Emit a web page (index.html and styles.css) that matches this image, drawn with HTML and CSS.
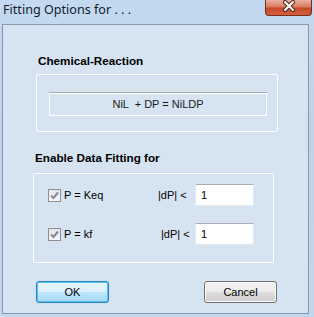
FILE: index.html
```html
<!DOCTYPE html>
<html>

<head>
    <meta charset="utf-8">
    <title>Fitting Options for . . .</title>
    <link rel="stylesheet" href="styles.css">
</head>

<body>
    <div class="window col">
        <div class="titlebar row">
            <span class="title">Fitting Options for . . .</span>
            <span class="close">
                <svg width="16" height="12" viewBox="0 0 16 12">
                    <path d="M4 2 L12 10 M12 2 L4 10" stroke="#4a2a22" stroke-width="4" stroke-linecap="round"/>
                    <path d="M4 2 L12 10 M12 2 L4 10" stroke="#fff" stroke-width="2" stroke-linecap="round"/>
                </svg>
            </span>
        </div>

        <div class="client">
            <p class="group-title">Chemical-Reaction</p>
            <div class="group group-reaction">
                <div class="reaction">NiL &nbsp;+ DP = NiLDP</div>
            </div>

            <p class="group-title group-title-fit">Enable Data Fitting for</p>
            <div class="group group-fit">
                <div class="fit-row row">
                    <label class="check-label row">
                        <span class="check">
                            <svg width="11" height="11" viewBox="0 0 11 11">
                                <path d="M2 5.5 L4.5 8 L9 2.5" fill="none" stroke="#7a8a9c" stroke-width="2"/>
                            </svg>
                        </span>
                        P = Keq
                    </label>
                    <span class="dp">|dP| &lt;</span>
                    <span class="field">1</span>
                </div>
                <div class="fit-row row">
                    <label class="check-label row">
                        <span class="check">
                            <svg width="11" height="11" viewBox="0 0 11 11">
                                <path d="M2 5.5 L4.5 8 L9 2.5" fill="none" stroke="#7a8a9c" stroke-width="2"/>
                            </svg>
                        </span>
                        P = kf
                    </label>
                    <span class="dp dp-shift">|dP| &lt;</span>
                    <span class="field">1</span>
                </div>
            </div>

            <div class="buttons row">
                <button class="btn btn-default">OK</button>
                <button class="btn">Cancel</button>
            </div>
        </div>
    </div>
</body>

</html>
```

FILE: styles.css
```css
body {
    margin: 0;
    font-family: "Liberation Sans", Arial, sans-serif;
    font-size: 11px;
    color: #000;
}

p {
    margin: 0;
}

.row {
    display: flex;
    flex-direction: row;
    align-items: center;
}

.col {
    display: flex;
    flex-direction: column;
}

.window {
    width: 314px;
    height: 317px;
    background: linear-gradient(#c4d9ef, #bcd3ea 40%, #c2d7ec);
}

.titlebar {
    height: 24px;
    justify-content: space-between;
    align-items: flex-start;
    flex-shrink: 0;
}

.title {
    font-family: "Noto Sans", sans-serif;
    font-size: 12.6px;
    line-height: 16px;
    color: #14202e;
    margin: 2px 0 0 3px;
}

.close {
    width: 47px;
    height: 16px;
    margin-right: 2px;
    box-sizing: border-box;
    border: 1px solid #7b2c1d;
    border-top: none;
    border-radius: 0 0 4px 4px;
    background: linear-gradient(#eab0a0, #d97a60 45%, #c4482a 55%, #d0603f);
    display: flex;
    justify-content: center;
    align-items: flex-start;
}

.client {
    flex: 1;
    margin: 0 5px 3px 2px;
    border: 1px solid #8598ae;
    background: #d6e4f2;
    padding: 29px 0 0 33px;
}

.group-title {
    font-weight: bold;
    font-size: 11.7px;
    line-height: 13px;
    margin-left: 2px;
}

.group {
    box-sizing: border-box;
    border: 1px solid #fff;
    border-radius: 2px;
}

.group-reaction {
    width: 242px;
    height: 58px;
    margin-top: 7px;
    padding: 18px 0 0 12px;
}

.reaction {
    width: 218px;
    height: 23px;
    box-sizing: border-box;
    border: 1px solid #fff;
    box-shadow: 0 -1px 0 #a3a8ae;
    text-align: center;
    line-height: 21px;
    color: #1a1a1a;
}

.group-title-fit {
    margin: 19px 0 0 -1px;
}

.group-fit {
    width: 241px;
    height: 90px;
    margin: 9px 0 0 -3px;
    padding: 10px 0 0 14px;
}

.fit-row {
    height: 22px;
}

.fit-row + .fit-row {
    margin-top: 17px;
}

.check-label {
    width: 110px;
    gap: 3px;
}

.check {
    width: 13px;
    height: 13px;
    box-sizing: border-box;
    border: 1px solid #8f8f8f;
    background: linear-gradient(#e6e6e6, #f6f6f6);
    display: flex;
    justify-content: center;
    align-items: center;
}

.dp {
    width: 37px;
}

.dp-shift {
    padding-left: 3px;
    width: 34px;
}

.field {
    width: 59px;
    height: 22px;
    box-sizing: border-box;
    background: #fff;
    border: 1px solid #e3e9ef;
    border-top-color: #abadb3;
    padding: 4px 0 0 5px;
    line-height: 13px;
}

.buttons {
    width: 241px;
    justify-content: space-between;
    margin-top: 18px;
}

.btn {
    width: 73px;
    height: 22px;
    box-sizing: border-box;
    font-family: "Liberation Sans", Arial, sans-serif;
    font-size: 11px;
    color: #000;
    border: 1px solid #707070;
    border-radius: 3px;
    background: linear-gradient(#f2f2f2, #ebebeb 50%, #dddddd 51%, #cfcfcf);
    box-shadow: inset 0 0 0 1px #fcfcfc;
    padding: 0;
}

.btn-default {
    border-color: #3c7fb1;
    background: linear-gradient(#eaf6fd, #d9f0fc 50%, #bee6fd 51%, #a7d9f5);
    box-shadow: inset 0 0 0 1px #48c6f6, 0 0 1px #48c6f6;
}
```
